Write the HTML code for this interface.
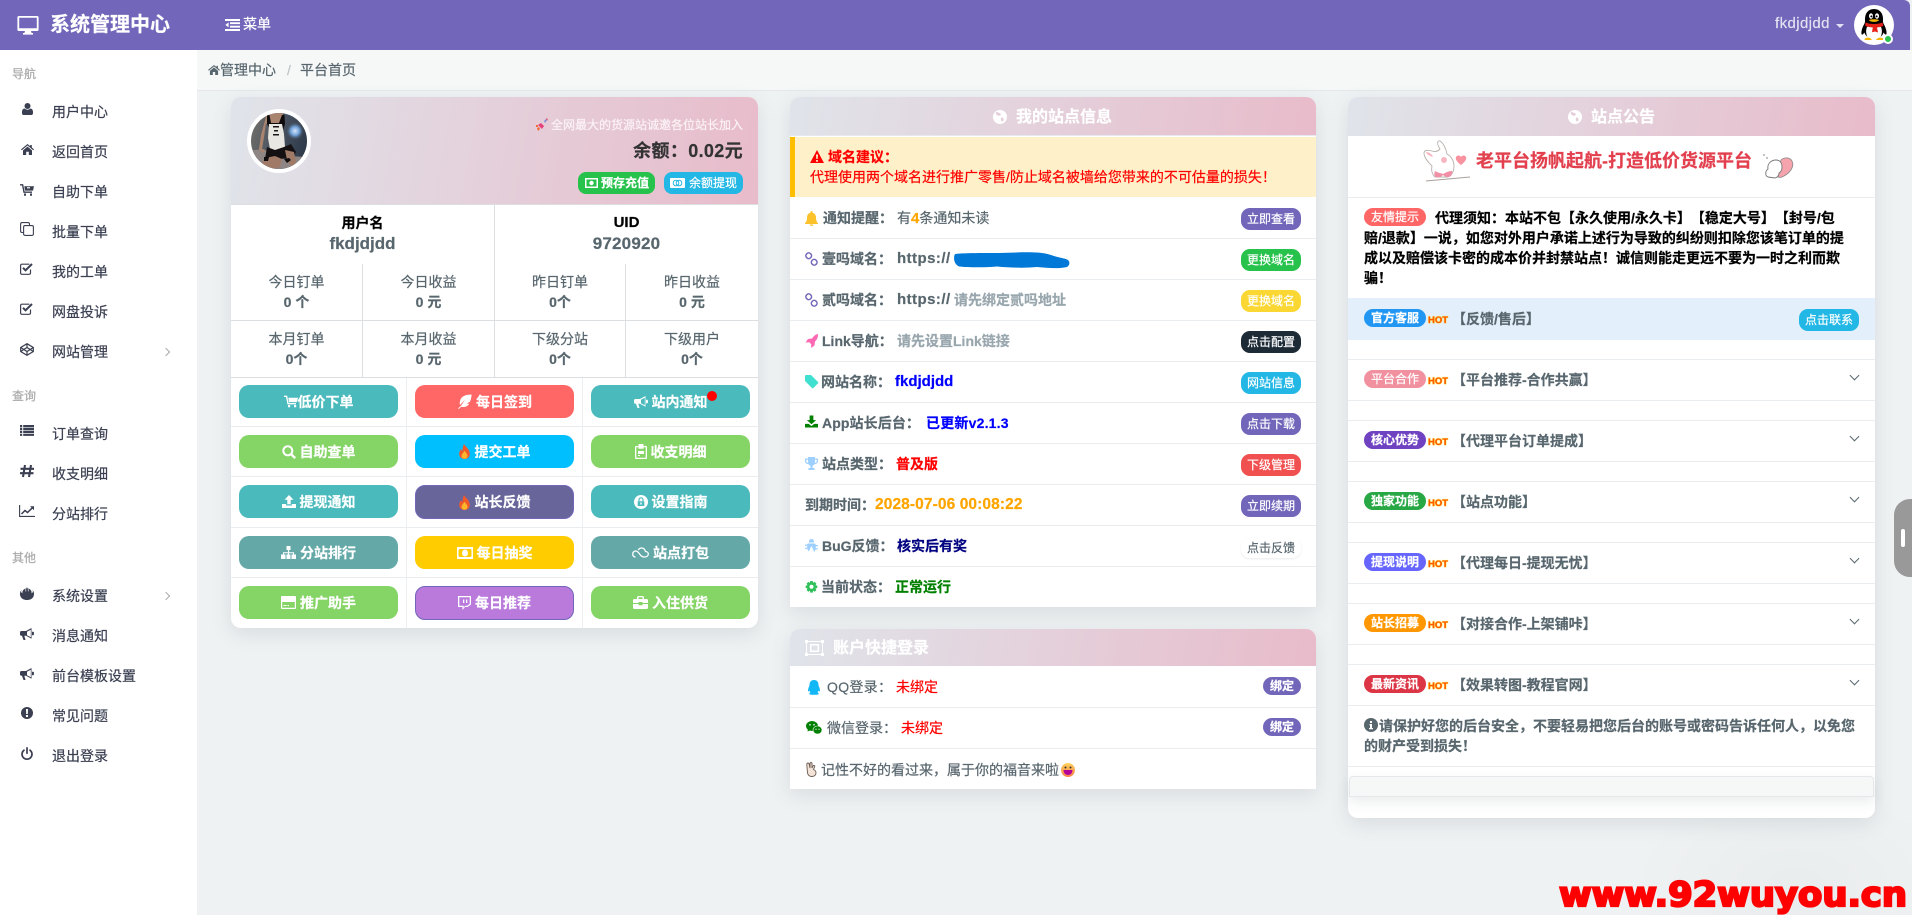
<!DOCTYPE html>
<html lang="zh"><head><meta charset="utf-8"><title>系统管理中心</title>
<style>
*{box-sizing:border-box}
html,body{margin:0;padding:0;width:1912px;height:915px;overflow:hidden;background:#eff2f3}
body{position:relative;font-family:"Liberation Sans","Noto Sans CJK SC",sans-serif;font-size:14px;color:#58666e;text-spacing-trim:space-all;-webkit-text-stroke-width:.2px}
.t{position:absolute;white-space:nowrap;line-height:20px}
.b{font-weight:700}
.a{position:absolute}
.ib{display:inline-block}
svg{display:block;overflow:visible}
.a svg,svg.a{position:absolute}
.card{position:absolute;background:#fff;border-radius:10px;box-shadow:0 6px 20px rgba(60,80,90,.13)}
.grad{position:absolute;background:linear-gradient(100deg,#e0e4ea,#e8bbca)}
.ln{position:absolute;height:1px;background:#e9edf0}
.ln2{position:absolute;height:1px;background:#dcdfe1}
.v{position:absolute;width:1px;background:#dcdfe1}
.v2{position:absolute;width:1px;background:#edf0f2}
.side{color:#3a3f51}
.sh{color:#a9a9a9;font-size:12px}
.btn{position:absolute;width:159px;height:33px;border-radius:10px;color:#fff;font-weight:700;display:flex;align-items:center;justify-content:center;gap:4px;line-height:20px;white-space:nowrap}
.pill{position:absolute;width:60px;height:22px;border-radius:9px;color:#fff;font-size:12px;text-align:center;line-height:22px;white-space:nowrap}
.tag{position:absolute;width:62px;height:18px;border-radius:9px;color:#fff;font-size:12px;font-weight:700;text-align:center;line-height:18px;white-space:nowrap}
.hot{position:absolute;font-size:9.5px;line-height:10px;font-weight:700;color:#ff5a00;text-shadow:0 0 1px #ffe000,0 0 1px #ffe000,0 0 1px #ffe000}
.cv{position:absolute;width:7px;height:7px;border-right:1.4px solid #58666e;border-bottom:1.4px solid #58666e;transform:rotate(45deg)}
.sc{position:absolute;width:6px;height:6px;border-right:1.3px solid #aaa;border-top:1.3px solid #aaa;transform:rotate(45deg)}
</style></head><body>

<div class="a" style="left:1620px;top:780px;width:292px;height:135px;background:radial-gradient(ellipse at 60% 80%,rgba(0,0,0,.025),rgba(0,0,0,0) 70%)"></div>

<!-- top bar -->
<div class="a" style="left:0;top:0;width:1910px;height:50px;background:#7266ba;border-top-right-radius:6px"></div>
<svg class="a" style="left:17px;top:15px" width="22" height="20" viewBox="0 0 22 20"><path fill="#fff" d="M2 1h18a1.6 1.6 0 0 1 1.6 1.6v11.8A1.6 1.6 0 0 1 20 16h-6l.6 2H16v1.6H6V18h1.4L8 16H2A1.6 1.6 0 0 1 .4 14.400V2.600A1.600 1.600 0 0 1 2 1zm.2 1.800v10.400h17.600V2.800z"/></svg>
<div class="t b" style="left:50px;top:15px;font-size:20px;color:#fff">系统管理中心</div>
<svg class="a" style="left:225px;top:19px" width="15" height="12" viewBox="0 0 15 12"><path fill="#fff" d="M0 0h15v2H0zM5 3.300h10v1.800H5zM5 6.800h10v1.800H5zM0 10h15v2H0zM3.600 3.400v5L.4 5.900z"/></svg>
<div class="t" style="left:243px;top:14px;color:#fff">菜单</div>
<div class="t" style="left:1775px;top:14px;color:#e4e1f2;font-size:15px;letter-spacing:.4px">fkdjdjdd</div>
<div class="a" style="left:1836px;top:24px;width:0;height:0;border:4px solid transparent;border-top-color:#e4e1f2"></div>
<svg class="a" style="left:1854px;top:5px" width="40" height="40" viewBox="0 0 40 40">
<circle cx="20" cy="20" r="20" fill="#fff"/>
<path fill="#000" d="M20 4c-6 0-9 4.500-9 10 0 2 .3 3-.7 5-2 3.500-3.200 7-2.800 10 .6 1.500 2 0 2.800-1.500 1 2.500 2.500 4 4 5h11.400c1.500-1 3-2.500 4-5 .8 1.500 2.200 3 2.800 1.500.4-3-.8-6.500-2.800-10-1-2-.7-3-.7-5 0-5.500-3-10-9-10z"/>
<path fill="#fff" d="M13 22c1-1 13-1 14 0 1.500 3 1 8-1 11H14c-2-3-2.500-8-1-11z"/>
<ellipse cx="17" cy="11" rx="2" ry="2.800" fill="#fff"/><ellipse cx="23" cy="11" rx="2" ry="2.800" fill="#fff"/>
<circle cx="17.400" cy="11.400" r="1" fill="#000"/><circle cx="22.600" cy="11.400" r="1" fill="#000"/>
<path fill="#f5b400" d="M15 15c2-1 8-1 10 0-1 2.500-9 2.500-10 0zM12 33c2-1 5 0 6 2h-7c-1 0 0-2 1-2zM28 33c-2-1-5 0-6 2h7c1 0 0-2-1-2z"/>
<path fill="#e62117" d="M11.500 17.500c4 2 13 2 17 0l.8 3.500c-2 .8-4 1.300-6.300 1.500l1 5-3-1-3 .8.800-4.800c-3-.2-5.500-.8-7.600-1.500z"/>
</svg>
<div class="a" style="left:1883px;top:34px;width:10px;height:10px;border-radius:50%;background:#27c24c;border:2px solid #fff"></div>

<!-- sidebar -->
<div class="a" style="left:0;top:50px;width:197px;height:865px;background:#fff"></div>
<div class="t sh" style="left:12px;top:64px">导航</div>
<div class="t side" style="left:52px;top:102px">用户中心</div>
<div class="t side" style="left:52px;top:142px">返回首页</div>
<div class="t side" style="left:52px;top:182px">自助下单</div>
<div class="t side" style="left:52px;top:222px">批量下单</div>
<div class="t side" style="left:52px;top:262px">我的工单</div>
<div class="t side" style="left:52px;top:302px">网盘投诉</div>
<div class="t side" style="left:52px;top:342px">网站管理</div>
<div class="t sh" style="left:12px;top:386px">查询</div>
<div class="t side" style="left:52px;top:424px">订单查询</div>
<div class="t side" style="left:52px;top:464px">收支明细</div>
<div class="t side" style="left:52px;top:504px">分站排行</div>
<div class="t sh" style="left:12px;top:548px">其他</div>
<div class="t side" style="left:52px;top:586px">系统设置</div>
<div class="t side" style="left:52px;top:626px">消息通知</div>
<div class="t side" style="left:52px;top:666px">前台模板设置</div>
<div class="t side" style="left:52px;top:706px">常见问题</div>
<div class="t side" style="left:52px;top:746px">退出登录</div>
<div class="sc" style="left:163px;top:349px"></div>
<div class="sc" style="left:163px;top:593px"></div>
<!-- side icons -->
<svg class="a" style="left:22px;top:103px" width="11" height="12" viewBox="0 0 11 12"><circle cx="5.500" cy="3" r="3" fill="#3a3f51"/><path fill="#3a3f51" d="M0 9c0-2.500 1.500-3.500 2.500-3.500 1 .8 2 1.200 3 1.200s2-.4 3-1.200c1 0 2.500 1 2.500 3.500v1.300c0 1-.7 1.700-1.700 1.700H1.700C.7 12 0 11.300 0 10.300z"/></svg>
<svg class="a" style="left:21px;top:144px" width="13" height="11" viewBox="0 0 13 11"><path fill="#3a3f51" d="M6.500 0L0 5.400l.8.900 5.700-4.800 5.700 4.800.8-.9-2.200-1.900V1H9.200v1.200zM2 6.400L6.500 2.600 11 6.400V11H7.800V7.700H5.200V11H2z"/></svg>
<svg class="a" style="left:20px;top:184px" width="14" height="12" viewBox="0 0 14 12"><path fill="none" stroke="#3a3f51" stroke-width="1.400" d="M0 .8h2.600l1.400 7.400h8"/><path fill="#3a3f51" d="M4.300 2.200H14L13 6.600H5z M4 9.500h2v2.200H4zM10 9.500h2v2.200h-2z"/><path fill="#fff" d="M7 3.200h3v1.200H7z"/></svg>
<svg class="a" style="left:20px;top:222px" width="14" height="14" viewBox="0 0 14 14"><g fill="none" stroke="#3a3f51" stroke-width="1.100"><path d="M3.500 10.500H2A1.500 1.500 0 0 1 .6 9V2A1.500 1.500 0 0 1 2 .6h6A1.500 1.500 0 0 1 9.500 2v1"/><rect x="3.600" y="3.600" width="9.800" height="9.800" rx="1.500"/></g></svg>
<svg class="a" style="left:20px;top:263px" width="13" height="12" viewBox="0 0 13 12"><path fill="none" stroke="#3a3f51" stroke-width="1.200" d="M10.500 6.500V10a1.300 1.300 0 0 1-1.300 1.300H1.900A1.300 1.300 0 0 1 .6 10V2.500A1.300 1.300 0 0 1 1.900 1.200h7.500"/><path fill="none" stroke="#3a3f51" stroke-width="2" d="M3 4.800l2.500 2.500L12 1"/></svg>
<svg class="a" style="left:20px;top:303px" width="13" height="12" viewBox="0 0 13 12"><path fill="none" stroke="#3a3f51" stroke-width="1.200" d="M10.500 6.500V10a1.300 1.300 0 0 1-1.300 1.300H1.900A1.300 1.300 0 0 1 .6 10V2.500A1.300 1.300 0 0 1 1.900 1.200h7.500"/><path fill="none" stroke="#3a3f51" stroke-width="2" d="M3 4.800l2.500 2.500L12 1"/></svg>
<svg class="a" style="left:20px;top:343px" width="14" height="13" viewBox="0 0 14 13"><g fill="none" stroke="#3a3f51" stroke-width="1.200"><path d="M7 .7L13.300 4.500v4L7 12.300.7 8.500v-4z"/><path d="M.7 4.500L7 8.500l6.300-4M.7 8.500L7 4.500l6.300 4M7 .7v3.800M7 8.500v3.800"/></g></svg>
<svg class="a" style="left:20px;top:425px" width="14" height="11" viewBox="0 0 14 11"><path fill="#3a3f51" d="M0 0h2.200v2.200H0zM3.200 0H14v2.200H3.200zM0 2.900h2.200v2.200H0zM3.200 2.900H14v2.200H3.200zM0 5.800h2.200v2.200H0zM3.200 5.800H14v2.200H3.200zM0 8.700h2.200v2.200H0zM3.200 8.700H14v2.200H3.200z"/></svg>
<svg class="a" style="left:20px;top:465px" width="14" height="12" viewBox="0 0 14 12"><path fill="none" stroke="#3a3f51" stroke-width="2.100" d="M5 0L3 12M11 0L9 12M.5 3.800H14M0 8.200H13.500"/></svg>
<svg class="a" style="left:19px;top:505px" width="16" height="12" viewBox="0 0 16 12"><path fill="none" stroke="#3a3f51" stroke-width="1.100" d="M.6 0v11.400H16"/><path fill="none" stroke="#3a3f51" stroke-width="1.500" d="M2.500 9l3.500-3.500 2.500 2L14 2.200"/><path fill="#3a3f51" d="M11 1.200h4v4z"/></svg>
<svg class="a" style="left:20px;top:587px" width="14" height="13" viewBox="0 0 14 13"><path fill="#3a3f51" d="M7 0l.9 2v2.500L8.600 4.200 8.300 1.400C11 2.500 12 4.500 11.500 6.500l1.500-1.500-.5-2C14 4.500 14.500 7 13.500 9.500 12.500 11.800 10 13 7 13S1.500 11.800.5 9.500C-.5 7 0 4.500 1.500 3l-.5 2 1.500 1.500C2 4.500 3 2.500 5.700 1.400L5.400 4.200l.7.300V2z"/></svg>
<svg class="a" style="left:20px;top:628px" width="14" height="12" viewBox="0 0 14 12"><path fill="#3a3f51" d="M11.500 0L6 3H1.500A1.500 1.500 0 0 0 0 4.500v1.800A1.500 1.500 0 0 0 1.500 7.800H2L3.500 12h2L4.300 7.800H6l5.500 3zM10.800 1.800v7.400L7 7.200V3.800z"/><path fill="#3a3f51" d="M12 3.800h1.200c.5 0 .8.500.8 1.700s-.3 1.700-.8 1.700H12z"/></svg>
<svg class="a" style="left:20px;top:668px" width="14" height="12" viewBox="0 0 14 12"><path fill="#3a3f51" d="M11.500 0L6 3H1.500A1.500 1.500 0 0 0 0 4.500v1.800A1.500 1.500 0 0 0 1.500 7.800H2L3.500 12h2L4.300 7.800H6l5.500 3zM10.800 1.800v7.400L7 7.200V3.800z"/><path fill="#3a3f51" d="M12 3.800h1.200c.5 0 .8.500.8 1.700s-.3 1.700-.8 1.700H12z"/></svg>
<svg class="a" style="left:21px;top:707px" width="12" height="12" viewBox="0 0 12 12"><circle cx="6" cy="6" r="6" fill="#3a3f51"/><path fill="#fff" d="M5 2h2l-.2 5H5.200zM5 8h2v2H5z"/></svg>
<svg class="a" style="left:21px;top:747px" width="12" height="13" viewBox="0 0 12 13"><path fill="none" stroke="#3a3f51" stroke-width="1.700" stroke-linecap="round" d="M3 3.200A5 5 0 1 0 9 3.200M6 .9v5.400"/></svg>

<!-- breadcrumb -->
<div class="a" style="left:197px;top:50px;width:1715px;height:41px;background:#f6f8f8;border-bottom:1px solid #e4e8ea"></div>
<svg class="a" style="left:208px;top:65px" width="12" height="10" viewBox="0 0 13 11"><path fill="#58666e" d="M6.500 0L0 5.400l.8.900 5.700-4.800 5.700 4.800.8-.9-2.200-1.900V1H9.200v1.200zM2 6.400L6.500 2.600 11 6.400V11H7.800V7.700H5.200V11H2z"/></svg>
<div class="t" style="left:220px;top:60px">管理中心</div>
<div class="t" style="left:287px;top:60px;color:#bcc4c8">/</div>
<div class="t" style="left:300px;top:60px">平台首页</div>

<!-- card 1 -->
<div class="card" style="left:231px;top:97px;width:527px;height:531px"></div>
<div class="grad" style="left:231px;top:97px;width:527px;height:107px;border-radius:10px 10px 0 0"></div>
<svg class="a" style="left:247px;top:109px" width="64" height="64" viewBox="0 0 64 64">
<defs><clipPath id="av"><circle cx="32" cy="32" r="28"/></clipPath><linearGradient id="avb" x1="0" y1="0" x2="1" y2=".3"><stop offset="0" stop-color="#7c756e"/><stop offset=".6" stop-color="#46505e"/><stop offset="1" stop-color="#2f3a4a"/></linearGradient><radialGradient id="glow"><stop offset="0" stop-color="#d5e6fb"/><stop offset=".5" stop-color="#6f9fd8"/><stop offset="1" stop-color="#46505e" stop-opacity="0"/></radialGradient></defs>
<circle cx="32" cy="32" r="32" fill="#fff"/>
<g clip-path="url(#av)"><rect width="64" height="64" fill="url(#avb)"/>
<path fill="#8e8684" d="M0 42l16-2 12 6 30 2 6 16H0z"/>
<circle cx="48" cy="22" r="9" fill="url(#glow)"/>
<path fill="#a9846f" d="M21 0h14l2 12-2 6H22l-3-4-2 14-2 12 4 2-4 2-3-4 2-14z"/>
<path fill="#2a2224" d="M22 0h12l-1 4h-10z"/>
<path fill="#0f0c0e" d="M20 6h2.500l1.500 8h8l3-8h2.500l.5 9-2 6H23l-3-6z"/>
<path fill="#e9e7e2" d="M22 15h13l2 10 1 13-7 4-8-2-2-11z"/>
<path fill="#1a1618" d="M26 17h6v1.500h-6zM27 21h4v1.500h-4zM26 25h6v1.500h-6z"/>
<path fill="#151113" d="M20 38l8 3 9-3 7-3 5 8-3 6-14 1-8 2-6-2z"/>
<path fill="#a07a67" d="M18 49l10-2 7 3-2 8-14 4-4-8zM38 41l9 2 2 10-4 6-5-8z"/>
<path fill="#0f0c0e" d="M17 48h5l-1 4h-4zM37 50l5-1 2 2-4 3z"/>
</g></svg>
<svg class="a" style="left:536px;top:118px" width="12" height="13" viewBox="0 0 12 13"><path fill="#7f8fd8" d="M8 3l2-2 1 1-2 3z"/><path fill="#e8407a" d="M2 7l3-2 3 3-2 3z"/><path fill="#f26a3a" d="M1 10l2-1 1 2-2 2zM0 7h2v2H0z"/><path fill="#e84f6a" d="M10 0l2 1-1 2z"/></svg>
<div class="t" style="left:551px;top:115px;font-size:12px;color:#fbf3f6">全网最大的货源站诚邀各位站长加入</div>
<div class="t b" style="right:1169px;top:141px;font-size:18px;color:#333;letter-spacing:.35px">余额：0.02元</div>
<div class="a" style="left:578px;top:172px;width:77px;height:22px;border-radius:8px;background:#27c24c;color:#fff;font-size:12px;font-weight:700;line-height:22px;padding-left:23px;white-space:nowrap">预存充值</div>
<svg class="a" style="left:585px;top:178px" width="13" height="10" viewBox="0 0 13 10"><path fill="#fff" fill-rule="evenodd" d="M0 0h13v10H0zM1.500 1.500v7h10v-7z"/><circle cx="6.500" cy="5" r="2.200" fill="#fff"/></svg>
<div class="a" style="left:664px;top:172px;width:79px;height:22px;border-radius:8px;background:#23b7e5;color:#fff;font-size:12px;line-height:22px;padding-left:25px;white-space:nowrap">余额提现</div>
<svg class="a" style="left:670px;top:178px" width="15" height="10" viewBox="0 0 15 10"><rect width="15" height="10" fill="#fff" rx="1"/><circle cx="6" cy="5" r="2.800" fill="none" stroke="#23b7e5"/><circle cx="9" cy="5" r="2.800" fill="none" stroke="#23b7e5"/></svg>

<div class="ln2" style="left:231px;top:204px;width:527px"></div>
<div class="v" style="left:494px;top:205px;height:172px"></div>
<div class="t b" style="left:231px;width:263px;top:213px;text-align:center;color:#000">用户名</div>
<div class="t b" style="left:231px;width:263px;top:234px;text-align:center;font-size:17px">fkdjdjdd</div>
<div class="t b" style="left:495px;width:263px;top:213px;text-align:center;color:#000;font-size:15px">UID</div>
<div class="t b" style="left:495px;width:263px;top:234px;text-align:center;font-size:17px;letter-spacing:.2px">9720920</div>
<div class="v" style="left:362px;top:264px;height:113px"></div>
<div class="v" style="left:625px;top:264px;height:113px"></div>
<div class="ln2" style="left:231px;top:320px;width:527px"></div>
<div class="ln2" style="left:231px;top:377px;width:527px"></div>

<div class="t" style="left:231px;width:131px;top:272px;text-align:center">今日钉单</div>
<div class="t b" style="left:231px;width:131px;top:292px;text-align:center">0 个</div>
<div class="t" style="left:363px;width:131px;top:272px;text-align:center">今日收益</div>
<div class="t b" style="left:363px;width:131px;top:292px;text-align:center">0 元</div>
<div class="t" style="left:495px;width:130px;top:272px;text-align:center">昨日钉单</div>
<div class="t b" style="left:495px;width:130px;top:292px;text-align:center">0个</div>
<div class="t" style="left:626px;width:132px;top:272px;text-align:center">昨日收益</div>
<div class="t b" style="left:626px;width:132px;top:292px;text-align:center">0 元</div>
<div class="t" style="left:231px;width:131px;top:329px;text-align:center">本月钉单</div>
<div class="t b" style="left:231px;width:131px;top:349px;text-align:center">0个</div>
<div class="t" style="left:363px;width:131px;top:329px;text-align:center">本月收益</div>
<div class="t b" style="left:363px;width:131px;top:349px;text-align:center">0 元</div>
<div class="t" style="left:495px;width:130px;top:329px;text-align:center">下级分站</div>
<div class="t b" style="left:495px;width:130px;top:349px;text-align:center">0个</div>
<div class="t" style="left:626px;width:132px;top:329px;text-align:center">下级用户</div>
<div class="t b" style="left:626px;width:132px;top:349px;text-align:center">0个</div>

<div class="v2" style="left:406px;top:378px;height:250px"></div>
<div class="v2" style="left:582px;top:378px;height:250px"></div>
<div class="ln" style="left:231px;top:426px;width:527px"></div>
<div class="ln" style="left:231px;top:476px;width:527px"></div>
<div class="ln" style="left:231px;top:527px;width:527px"></div>
<div class="ln" style="left:231px;top:577px;width:527px"></div>

<!-- row 1 -->
<div class="btn" style="left:239px;top:385px;background:#4bbabc;gap:0"><svg width="14" height="13" viewBox="0 0 14 12"><path fill="none" stroke="#fff" stroke-width="1.400" d="M0 .8h2.600l1.400 7.400h8"/><path fill="#fff" d="M4.300 2.200H14L13 6.600H5zM4 9.500h2.200v2.200H4zM10 9.500h2.200v2.200H10z"/></svg>低价下单</div>
<div class="btn" style="left:415px;top:385px;background:#ff6666"><svg width="15" height="15" viewBox="0 0 15 15"><path fill="#fff" d="M14.500.5C9 .5 5 2 3.500 5.500c-1 2.500-.8 4.500-.5 5.500L8 5.500 4 11.800 1 14.500l.8.500 2.400-2.300c2.800.8 6.300 0 8-3L9.500 9.500l3.500-1.700c1-2.500 1.500-5 1.500-7.300z"/></svg>每日签到</div>
<div class="btn" style="left:591px;top:385px;background:#4bbabc"><svg width="14" height="12" viewBox="0 0 14 12"><path fill="#fff" d="M11.500 0L6 3H1.500A1.500 1.500 0 0 0 0 4.500v1.800A1.500 1.500 0 0 0 1.500 7.800H2L3.500 12h2L4.300 7.800H6l5.500 3zM10.800 1.800v7.400L7 7.200V3.800z"/><path fill="#fff" d="M12 3.800h1.200c.5 0 .8.500.8 1.700s-.3 1.700-.8 1.700H12z"/></svg>站内通知</div>
<div class="a" style="left:707px;top:391px;width:10px;height:10px;border-radius:50%;background:#f00"></div>
<!-- row 2 -->
<div class="btn" style="left:239px;top:435px;background:#85d466"><svg width="14" height="14" viewBox="0 0 14 14"><circle cx="5.800" cy="5.800" r="4.500" fill="none" stroke="#fff" stroke-width="2"/><path stroke="#fff" stroke-width="2.400" d="M9 9l4.200 4.200"/></svg>自助查单</div>
<div class="btn" style="left:415px;top:435px;background:#00bfff;gap:5px"><svg width="11" height="15" viewBox="0 0 11 15"><path fill="#f0592a" d="M5 0c1 2.500 5.500 4.500 5.800 9.500C11 13 8.500 15 5.500 15S0 13 .2 9.500C.3 7.500 1.500 6 2 5c.5 1 .8 1.500 1.500 2C3.500 4 4 2 5 0z"/><path fill="#fdb52c" d="M5.500 6.500c.5 1.500 3 3 3 5.500 0 1.700-1.300 2.800-3 2.800s-3-1.100-3-2.800c0-2 2.300-3.500 3-5.500z"/></svg>提交工单</div>
<div class="btn" style="left:591px;top:435px;background:#85d466"><svg width="12" height="15" viewBox="0 0 12 15"><path fill="#fff" fill-rule="evenodd" d="M1 2h2.500V0h5v2H11a1 1 0 0 1 1 1v11a1 1 0 0 1-1 1H1a1 1 0 0 1-1-1V3a1 1 0 0 1 1-1zm.3 1.300v10.400h9.400V3.300H8.500v1.500h-5V3.300zM3 7h6v3H3zM3 11h2v1H3z"/></svg>收支明细</div>
<!-- row 3 -->
<div class="btn" style="left:239px;top:485px;background:#4bbabc"><svg width="14" height="13" viewBox="0 0 14 13"><path fill="#fff" d="M7 0l4.500 4.800H8.700v4.500H5.300V4.800H2.500zM0 9h4.200v1.500h5.600V9H14v4H0z"/></svg>提现通知</div>
<div class="btn" style="left:415px;top:485px;height:34px;background:#67659a;border:1px solid #7266ba;gap:5px"><svg width="11" height="15" viewBox="0 0 11 15"><path fill="#f0592a" d="M5 0c1 2.500 5.500 4.500 5.800 9.500C11 13 8.500 15 5.500 15S0 13 .2 9.500C.3 7.500 1.500 6 2 5c.5 1 .8 1.500 1.500 2C3.500 4 4 2 5 0z"/><path fill="#fdb52c" d="M5.500 6.500c.5 1.500 3 3 3 5.500 0 1.700-1.300 2.800-3 2.800s-3-1.100-3-2.800c0-2 2.300-3.500 3-5.500z"/></svg>站长反馈</div>
<div class="btn" style="left:591px;top:485px;background:#4bbabc"><svg width="14" height="14" viewBox="0 0 14 14"><circle cx="7" cy="7" r="7" fill="#fff"/><path fill="#4bbabc" d="M3.700 6.200h6.600v4.800H3.700z"/><path fill="none" stroke="#4bbabc" stroke-width="1.200" d="M5 6V4.800a2 2 0 0 1 4 0V6"/><path fill="#fff" d="M6.300 7.500h1.400v2H6.300z"/></svg>设置指南</div>
<!-- row 4 -->
<div class="btn" style="left:239px;top:536px;background:#64a8a8"><svg width="15" height="13" viewBox="0 0 15 13"><path fill="#fff" d="M5.500 0h4v4h-1.400v2.300h5v2.200H15V13h-4.500V8.500h1.500V7.300H8.100v1.200h1.400V13h-4V8.500h1.400V7.300H3v1.200h1.500V13H0V8.500h2V6.300h4.900V4H5.500z"/></svg>分站排行</div>
<div class="btn" style="left:415px;top:536px;background:#fc0"><svg width="16" height="12" viewBox="0 0 16 12"><path fill="#fff" fill-rule="evenodd" d="M0 0h16v12H0zM2.500 2L1.500 3v6l1 1h11l1-1V3l-1-1z"/><ellipse cx="8" cy="6" rx="3" ry="3.500" fill="#fff"/></svg>每日抽奖</div>
<div class="btn" style="left:591px;top:536px;background:#64a8a8"><svg width="17" height="11" viewBox="0 0 17 11"><path fill="none" stroke="#fff" stroke-width="1.300" d="M3.500 10C1.500 10 .7 8.500.7 7 .7 5.300 2 4 3.800 4c2 0 3 2 4.200 3.500C9 9 10 10 12.500 10 14.800 10 16.300 8.800 16.300 7 16.300 5.500 15 4.500 13.500 4.500 13 2.500 11.500 1 9.500 1 8 1 7 1.800 6.300 3"/></svg>站点打包</div>
<!-- row 5 -->
<div class="btn" style="left:239px;top:586px;background:#85d466"><svg width="15" height="13" viewBox="0 0 15 13"><path fill="#fff" fill-rule="evenodd" d="M1 0h13a1 1 0 0 1 1 1v11a1 1 0 0 1-1 1H1a1 1 0 0 1-1-1V1a1 1 0 0 1 1-1zm.2 6v5.800h12.600V6zM2.500 9h3v1h-3zM6.500 9h1.500v1H6.500z"/></svg>推广助手</div>
<div class="btn" style="left:415px;top:586px;height:34px;background:#b97adc;border:1px solid #7266ba"><svg width="13" height="14" viewBox="0 0 13 14"><path fill="#fff" fill-rule="evenodd" d="M0 0h13v8.500L9.500 11H7l-2.500 3V11H0zM1.300 1.300v8.400h4.400v1.800l1.500-1.800h2l2.500-1.800V1.300zM5 3.500h1.300v3.500H5zM8 3.500h1.300v3.500H8z"/></svg>每日推荐</div>
<div class="btn" style="left:591px;top:586px;background:#85d466"><svg width="15" height="13" viewBox="0 0 15 13"><path fill="#fff" d="M5 0h5l1 1v2h2.500A1.500 1.500 0 0 1 15 4.500V7H9.500v-1h-4v1H0V4.500A1.500 1.500 0 0 1 1.500 3H4V1zM5.500 1.300V3h4V1.300zM0 8h5.500v1.200h4V8H15v3.500a1.500 1.500 0 0 1-1.500 1.500h-12A1.500 1.500 0 0 1 0 11.500z"/></svg>入住供货</div>

<!-- card 2 -->
<div class="card" style="left:790px;top:97px;width:526px;height:510px;border-radius:10px 10px 0 0"></div>
<div class="grad" style="left:790px;top:97px;width:526px;height:39px;border-radius:10px 10px 0 0;border-bottom:1px solid #e8e8f0"></div>
<svg class="a" style="left:993px;top:110px" width="14" height="14" viewBox="0 0 14 14"><circle cx="7" cy="7" r="7" fill="#fff"/><path fill="#e4cdd8" d="M3 1.800C5 3 7 2.500 8 4.500 7 6 5 6 4 5 3 4.500 2.500 3 3 1.800zM8.500 7.500c1.500 0 2.500 1 2 3-1 1.200-2 1-2.500 0-.5-1 0-2.500.5-3z"/></svg>
<div class="t b" style="left:1016px;top:108px;font-size:16px;color:#fff">我的站点信息</div>
<div class="a" style="left:790px;top:137px;width:526px;height:60px;background:#fef1c9;border-left:5px solid #ffbe00"></div>
<svg class="a" style="left:810px;top:150px" width="14" height="13" viewBox="0 0 14 13"><path fill="#f00" fill-rule="evenodd" d="M7 0l7 13H0zM6 4.500l.3 4.500h1.400L8 4.500zM6.100 10v1.700h1.800V10z"/></svg>
<div class="t b" style="left:828px;top:147px;color:#f00">域名建议：</div>
<div class="t" style="left:810px;top:167px;color:#f00">代理使用两个域名进行推广零售/防止域名被墙给您带来的不可估量的损失！</div>

<div class="ln" style="left:790px;top:238px;width:526px"></div>
<div class="ln" style="left:790px;top:279px;width:526px"></div>
<div class="ln" style="left:790px;top:320px;width:526px"></div>
<div class="ln" style="left:790px;top:361px;width:526px"></div>
<div class="ln" style="left:790px;top:402px;width:526px"></div>
<div class="ln" style="left:790px;top:443px;width:526px"></div>
<div class="ln" style="left:790px;top:484px;width:526px"></div>
<div class="ln" style="left:790px;top:525px;width:526px"></div>
<div class="ln" style="left:790px;top:566px;width:526px"></div>

<!-- r1 -->
<svg class="a" style="left:805px;top:211px" width="13" height="15" viewBox="0 0 13 15"><path fill="#fcc22c" d="M6.500 0a1 1 0 0 1 1 1v.7C9.800 2.200 11 4 11 6.500c0 3 .7 4.500 2 5.800v.7H0v-.7C1.300 11 2 9.500 2 6.500 2 4 3.200 2.200 5.500 1.700V1a1 1 0 0 1 1-1zM4.800 13.500h3.400c0 1-.7 1.500-1.700 1.500s-1.700-.5-1.700-1.500z"/></svg>
<div class="t b" style="left:823px;top:208px">通知提醒：</div>
<div class="t" style="left:897px;top:208px">有<span class="b" style="color:#ffa500;font-size:15px">4</span>条通知未读</div>
<div class="pill" style="left:1241px;top:208px;background:#7266ba">立即查看</div>
<!-- r2 -->
<svg class="a" style="left:805px;top:252px" width="13" height="14" viewBox="0 0 13 14"><g fill="none" stroke="#7266ba" stroke-width="1.500"><rect x="1" y="1" width="5.500" height="5.500" rx="2.500" transform="rotate(45 3.700 3.700)"/><rect x="6.500" y="7.500" width="5.500" height="5.500" rx="2.500" transform="rotate(45 9.200 10.200)"/></g></svg>
<div class="t b" style="left:822px;top:249px">壹吗域名：</div>
<div class="t b" style="left:897px;top:249px;font-size:15px;letter-spacing:.45px">https://</div>
<svg class="a" style="left:954px;top:252px" width="116" height="17" viewBox="0 0 116 17"><path fill="#0078d7" d="M1 2C10 1 25 1 45 1c20-.5 40-2 52 2 8 3 14 3 17 5 2 2 2 5-1 7-8 2-20 1-30 0-10 1-25 1-40-.5-12 1-28 1-38 0C0 12-1 6 1 2z"/></svg>
<div class="pill" style="left:1241px;top:249px;background:#27c24c">更换域名</div>
<!-- r3 -->
<svg class="a" style="left:805px;top:293px" width="13" height="14" viewBox="0 0 13 14"><g fill="none" stroke="#7266ba" stroke-width="1.500"><rect x="1" y="1" width="5.500" height="5.500" rx="2.500" transform="rotate(45 3.700 3.700)"/><rect x="6.500" y="7.500" width="5.500" height="5.500" rx="2.500" transform="rotate(45 9.200 10.200)"/></g></svg>
<div class="t b" style="left:822px;top:290px">贰吗域名：</div>
<div class="t b" style="left:897px;top:290px;font-size:15px;letter-spacing:.45px">https://</div>
<div class="t b" style="left:954px;top:290px;color:#98a6ad">请先绑定贰吗地址</div>
<div class="pill" style="left:1241px;top:290px;background:#fad733">更换域名</div>
<!-- r4 -->
<svg class="a" style="left:805px;top:334px" width="13" height="14" viewBox="0 0 13 14"><path fill="#ff69b4" d="M13 0c.2 3-.8 5.500-3 7.500l-.5 4L6 14l.3-3.700-2-2L.5 8.500 3 5l4-.5C9 2 10.500.3 13 0z"/></svg>
<div class="t b" style="left:822px;top:331px">Link导航：</div>
<div class="t b" style="left:897px;top:331px;color:#98a6ad">请先设置Link链接</div>
<div class="pill" style="left:1241px;top:331px;background:#1c2b36">点击配置</div>
<!-- r5 -->
<svg class="a" style="left:805px;top:375px" width="13" height="13" viewBox="0 0 13 13"><path fill="#40e0d0" d="M0 1a1 1 0 0 1 1-1h5l7 7a1 1 0 0 1 0 1.400L8.400 13a1 1 0 0 1-1.400 0L0 6z"/></svg>
<div class="t b" style="left:821px;top:372px">网站名称：</div>
<div class="t b" style="left:895px;top:372px;color:#00f;font-size:15px">fkdjdjdd</div>
<div class="pill" style="left:1241px;top:372px;background:#23b7e5">网站信息</div>
<!-- r6 -->
<svg class="a" style="left:805px;top:415px" width="13" height="13" viewBox="0 0 14 13"><path fill="#008000" d="M5 0h4v5h3L7 9.500 2 5h3zM0 9h4l3 2.500L10 9h4v4H0z"/></svg>
<div class="t b" style="left:822px;top:413px;letter-spacing:.1px">App站长后台：</div>
<div class="t b" style="left:926px;top:413px;color:#00f;letter-spacing:.2px">已更新v2.1.3</div>
<div class="pill" style="left:1241px;top:413px;background:#7266ba">点击下载</div>
<!-- r7 -->
<svg class="a" style="left:805px;top:457px" width="13" height="13" viewBox="0 0 13 13"><path fill="#9dd0ff" d="M3 0h7v1.500h3V4c0 2-1.500 3-3.500 3.300C9 8 8 8.700 7.500 9v2h2v2h-6v-2h2V9C5 8.700 4 8 3.500 7.300 1.500 7 0 6 0 4V1.500h3zM1.200 2.700V4c0 1 .8 1.700 2 2-.2-1-.2-2-.2-3.300zM11.800 2.700H10c0 1.300 0 2.300-.2 3.300 1.200-.3 2-1 2-2z"/></svg>
<div class="t b" style="left:822px;top:454px">站点类型：</div>
<div class="t b" style="left:896px;top:454px;color:#f00">普及版</div>
<div class="pill" style="left:1241px;top:454px;background:#f05050">下级管理</div>
<!-- r8 -->
<div class="t b" style="left:805px;top:495px">到期时间：</div>
<div class="t b" style="left:875px;top:495px;color:#ffa500;font-size:15.5px;letter-spacing:.1px">2028-07-06 00:08:22</div>
<div class="pill" style="left:1241px;top:495px;background:#7266ba">立即续期</div>
<!-- r9 -->
<svg class="a" style="left:805px;top:539px" width="13" height="14" viewBox="0 0 13 14"><path fill="#9dd0ff" d="M4 2.500a2.500 2.500 0 0 1 5 0v1H4zM3 4.500h7c.5.500.7 1 .8 1.500H13v1.200h-2.200v2H13v1.200h-2.400c-.3 1-.8 1.800-1.500 2.500L6.800 7.500h-.6L3.900 12.400c-.7-.7-1.200-1.500-1.500-2.500H0V8.700h2.200v-2H0V5.500h2.200c.1-.5.300-.7.800-1z"/></svg>
<div class="t b" style="left:822px;top:536px">BuG反馈：</div>
<div class="t b" style="left:897px;top:536px;color:#000080">核实后有奖</div>
<div class="pill" style="left:1241px;top:538px;background:#fff;color:#58666e;height:20px;line-height:20px;box-shadow:0 1px 2px rgba(0,0,0,.08)">点击反馈</div>
<!-- r10 -->
<svg class="a" style="left:805px;top:581px" width="13" height="13" viewBox="0 0 13 13"><path fill="#2fc05a" d="M5.300 0h2.400l.4 1.800 1.600-.9 1.700 1.700-.9 1.600 1.800.4v2.400l-1.800.4.900 1.600-1.700 1.700-1.600-.9-.4 1.800H5.300l-.4-1.800-1.600.9-1.700-1.700.9-1.600L.7 7V4.600l1.800-.4-.9-1.600 1.700-1.700 1.600.9z"/><circle cx="6.500" cy="5.800" r="2" fill="#fff"/></svg>
<div class="t b" style="left:821px;top:577px">当前状态：</div>
<div class="t b" style="left:895px;top:577px;color:#008000">正常运行</div>

<!-- card 3 -->
<div class="card" style="left:790px;top:629px;width:526px;height:160px;border-radius:10px 10px 0 0"></div>
<div class="grad" style="left:790px;top:629px;width:526px;height:37px;border-radius:10px 10px 0 0"></div>
<svg class="a" style="left:805px;top:640px" width="19" height="16" viewBox="0 0 19 16"><g fill="#fff"><path d="M0 0h3v3H0zM16 0h3v3h-3zM0 13h3v3H0zM16 13h3v3h-3zM3 1h13v1H3zM3 14h13v1H3zM1 3h1v10H1zM17 3h1v10h-1z"/><path fill-rule="evenodd" d="M5 4h9v8H5zM6.500 5.500v5h6v-5z"/></g></svg>
<div class="t b" style="left:833px;top:639px;font-size:16px;color:#fff">账户快捷登录</div>
<div class="ln" style="left:790px;top:707px;width:526px"></div>
<div class="ln" style="left:790px;top:748px;width:526px"></div>
<svg class="a" style="left:807px;top:680px" width="14" height="15" viewBox="0 0 14 15"><path fill="#12b7f5" d="M7 0c3 0 4.500 2 4.500 5 0 1 .5 1.500 1 3 .7 2 .5 3.500 0 3.500-.3 0-.6-.5-1-1-.2.8-.5 1.500-1 2 .7.300 1.300.700 1.300 1.200 0 .8-2.800 1.300-4.800 1C5 15 2.200 14.500 2.200 13.700c0-.5.600-.9 1.300-1.200-.5-.5-.8-1.200-1-2-.4.5-.7 1-1 1-.5 0-.7-1.500 0-3.500.5-1.500 1-2 1-3C2.500 2 4 0 7 0z"/></svg>
<div class="t" style="left:827px;top:677px;letter-spacing:.3px">QQ登录：</div>
<div class="t" style="left:896px;top:677px;color:#f00">未绑定</div>
<div class="a" style="left:1263px;top:677px;width:38px;height:18px;border-radius:9px;background:#7266ba;color:#fff;font-size:12px;font-weight:700;text-align:center;line-height:18px">绑定</div>
<svg class="a" style="left:806px;top:721px" width="16" height="14" viewBox="0 0 16 14"><ellipse cx="6" cy="5" rx="6" ry="5" fill="#008000"/><path fill="#008000" d="M2 8l-.5 2.500L5 9z"/><ellipse cx="11.500" cy="9" rx="4.500" ry="4" fill="#008000" stroke="#fff" stroke-width=".6"/><circle cx="4" cy="3.800" r=".8" fill="#fff"/><circle cx="8" cy="3.800" r=".8" fill="#fff"/><circle cx="10" cy="8.200" r=".6" fill="#fff"/><circle cx="13" cy="8.200" r=".6" fill="#fff"/></svg>
<div class="t" style="left:827px;top:718px">微信登录：</div>
<div class="t" style="left:901px;top:718px;color:#f00">未绑定</div>
<div class="a" style="left:1263px;top:718px;width:38px;height:18px;border-radius:9px;background:#7266ba;color:#fff;font-size:12px;font-weight:700;text-align:center;line-height:18px">绑定</div>
<svg class="a" style="left:805px;top:762px" width="13" height="15" viewBox="0 0 13 15"><path fill="#f3e3d8" stroke="#6b5a50" stroke-width=".9" d="M3 1c.8 0 1 .6 1.200 1.300L5 6V1.700C5 1 5.500.5 6 .5s1 .5 1 1.200V6l1-2c.3-.6.800-.8 1.300-.6.500.2.600.8.400 1.300L8.500 7.500c1.300.5 2.500 1.500 2.500 3.300 0 2.400-1.800 3.700-4 3.700-2.500 0-4-1.500-4.500-3.500L1.800 2.500C1.700 1.700 2.200 1 3 1z"/></svg>
<div class="t" style="left:821px;top:760px">记性不好的看过来，属于你的福音来啦</div>
<svg class="a" style="left:1061px;top:763px" width="14" height="14" viewBox="0 0 14 14"><defs><linearGradient id="emo" x1="0" y1="0" x2="0" y2="1"><stop offset="0" stop-color="#ffd35c"/><stop offset="1" stop-color="#f7804a"/></linearGradient></defs><circle cx="7" cy="7" r="7" fill="url(#emo)"/><circle cx="4.500" cy="4.500" r="1" fill="#333"/><circle cx="9.500" cy="4.500" r="1" fill="#333"/><path fill="#b3009b" d="M2.500 7h9c0 3-2 5-4.500 5s-4.500-2-4.500-5z"/></svg>

<!-- card 4 -->
<div class="card" style="left:1348px;top:97px;width:527px;height:721px"></div>
<div class="grad" style="left:1348px;top:97px;width:527px;height:39px;border-radius:10px 10px 0 0"></div>
<svg class="a" style="left:1568px;top:110px" width="14" height="14" viewBox="0 0 14 14"><circle cx="7" cy="7" r="7" fill="#fff"/><path fill="#e4cdd8" d="M3 1.800C5 3 7 2.500 8 4.500 7 6 5 6 4 5 3 4.500 2.500 3 3 1.800zM8.500 7.500c1.500 0 2.500 1 2 3-1 1.200-2 1-2.500 0-.5-1 0-2.500.5-3z"/></svg>
<div class="t b" style="left:1591px;top:108px;font-size:16px;color:#fff">站点公告</div>
<!-- banner -->
<svg class="a" style="left:1423px;top:140px" width="47" height="43" viewBox="0 0 47 43">
<path fill="#fff" stroke="#b8b0ac" stroke-width=".9" d="M17 9C13 3 15 0 17 1c3 2 6 7 7 13 4 2 7 7 7 12 0 5-2 9-6 11H12c-3-3-4-7-3-11C6 23 1 18 1 13c0-3 4-3 8-2 3 1 5 1 8-2z"/>
<path fill="#f8b6c0" d="M3 12c3 0 6 2 7 5-3-1-6-2-7-5zM24 20a3 3 0 1 1-6 0 3 3 0 0 1 6 0z"/>
<path fill="#f08fa5" d="M12 31c3 2 6 2 8 3 2-1 5-3 9-3 1 3-1 6-4 6-2 0-4-1-5-2-2 2-5 3-7 2-2-1-2-4-1-6z"/>
<path fill="#f8929e" d="M38 17c1-2 4-2 5 0 1 2-1 5-5 8-4-3-6-6-5-8 1-2 4-2 5 0z"/>
<path stroke="#a8a09c" stroke-width="1" d="M3 41l44-4"/></svg>
<div class="t b" style="left:1476px;top:150px;font-size:18px;line-height:22px;color:#e2404e">老平台扬帆起航-打造低价货源平台</div>
<svg class="a" style="left:1763px;top:153px" width="32" height="27" viewBox="0 0 32 27">
<path fill="#f5a3ad" stroke="#888" stroke-width=".8" d="M18 7c3-3 9-3 11 1 3 6-3 13-10 16-3 1-5 0-5-2z"/>
<path fill="#fff" stroke="#777" stroke-width=".9" d="M5 24c-3-1-3-6 0-8-1-5 3-9 8-9 4 0 6 3 6 7 0 3-1 5-3 6 0 2-1 4-4 5z"/>
<circle cx="1" cy="2" r=".7" fill="#666"/><circle cx="4" cy="5" r=".7" fill="#666"/></svg>
<div class="ln" style="left:1348px;top:197px;width:527px"></div>
<!-- notice -->
<div class="tag" style="left:1364px;top:208px;background:#ff6666;font-weight:400">友情提示</div>
<div class="t b" style="left:1435px;top:208px;color:#000">代理须知：本站不包【永久使用/永久卡<span class="ib">】</span><span class="ib">【</span>稳定大号<span class="ib">】</span><span class="ib">【</span>封号/包</div>
<div class="t b" style="left:1364px;top:228px;color:#000">赔/退款】一说，如您对外用户承诺上述行为导致的纠纷则扣除您该笔订单的提</div>
<div class="t b" style="left:1364px;top:248px;color:#000">成以及赔偿该卡密的成本价并封禁站点！诚信则能走更远不要为一时之利而欺</div>
<div class="t b" style="left:1364px;top:268px;color:#000">骗！</div>
<!-- blue row -->
<div class="a" style="left:1348px;top:298px;width:527px;height:42px;background:#e3f0fb"></div>
<div class="tag" style="left:1364px;top:309px;background:#2196f3">官方客服</div>
<div class="hot" style="left:1428px;top:316px">HOT</div>
<div class="t b" style="left:1452px;top:309px">【反馈/售后】</div>
<div class="pill" style="left:1799px;top:309px;background:#23b7e5">点击联系</div>
<!-- accordion -->
<div class="ln" style="left:1348px;top:359px;width:527px"></div><div class="ln" style="left:1348px;top:400px;width:527px"></div>
<div class="tag" style="left:1364px;top:370px;background:#f191a0;font-weight:400">平台合作</div><div class="hot" style="left:1428px;top:377px">HOT</div>
<div class="t b" style="left:1452px;top:370px">【平台推荐-合作共赢】</div><div class="cv" style="left:1851px;top:372px"></div>
<div class="ln" style="left:1348px;top:420px;width:527px"></div><div class="ln" style="left:1348px;top:461px;width:527px"></div>
<div class="tag" style="left:1364px;top:431px;background:#6f42c1">核心优势</div><div class="hot" style="left:1428px;top:438px">HOT</div>
<div class="t b" style="left:1452px;top:431px">【代理平台订单提成】</div><div class="cv" style="left:1851px;top:433px"></div>
<div class="ln" style="left:1348px;top:481px;width:527px"></div><div class="ln" style="left:1348px;top:522px;width:527px"></div>
<div class="tag" style="left:1364px;top:492px;background:#28a745">独家功能</div><div class="hot" style="left:1428px;top:499px">HOT</div>
<div class="t b" style="left:1452px;top:492px">【站点功能】</div><div class="cv" style="left:1851px;top:494px"></div>
<div class="ln" style="left:1348px;top:542px;width:527px"></div><div class="ln" style="left:1348px;top:583px;width:527px"></div>
<div class="tag" style="left:1364px;top:553px;background:#6666ff">提现说明</div><div class="hot" style="left:1428px;top:560px">HOT</div>
<div class="t b" style="left:1452px;top:553px">【代理每日-提现无忧】</div><div class="cv" style="left:1851px;top:555px"></div>
<div class="ln" style="left:1348px;top:603px;width:527px"></div><div class="ln" style="left:1348px;top:644px;width:527px"></div>
<div class="tag" style="left:1364px;top:614px;background:#ff9800">站长招募</div><div class="hot" style="left:1428px;top:621px">HOT</div>
<div class="t b" style="left:1452px;top:614px">【对接合作-上架铺咔】</div><div class="cv" style="left:1851px;top:616px"></div>
<div class="ln" style="left:1348px;top:664px;width:527px"></div><div class="ln" style="left:1348px;top:705px;width:527px"></div>
<div class="tag" style="left:1364px;top:675px;background:#dc3545">最新资讯</div><div class="hot" style="left:1428px;top:682px">HOT</div>
<div class="t b" style="left:1452px;top:675px">【效果转图-教程官网】</div><div class="cv" style="left:1851px;top:677px"></div>
<!-- footer text -->
<svg class="a" style="left:1364px;top:718px" width="14" height="14" viewBox="0 0 14 14"><circle cx="7" cy="7" r="7" fill="#58666e"/><path fill="#fff" d="M6 3h2v2H6zM5.500 6h2.500v4h1v1.200H5V10h1V7.200h-.5z"/></svg>
<div class="t b" style="left:1379px;top:716px">请保护好您的后台安全，不要轻易把您后台的账号或密码告诉任何人，以免您</div>
<div class="t b" style="left:1364px;top:736px">的财产受到损失！</div>
<div class="ln" style="left:1348px;top:766px;width:527px"></div>
<div class="a" style="left:1349px;top:776px;width:525px;height:21px;background:#f6f8f8;border:1px solid #e4e8ea;border-radius:4px 4px 0 0;box-shadow:0 5px 12px rgba(60,80,90,.1)"></div>

<!-- drag handle -->
<div class="a" style="left:1894px;top:499px;width:18px;height:78px;background:#999;border-radius:16px 0 0 16px"></div>
<div class="a" style="left:1901px;top:529px;width:4px;height:18px;background:#fff;border-radius:2px"></div>

<!-- watermark -->
<svg class="a" style="left:1555px;top:872px" width="357" height="43" viewBox="0 0 357 43"><text x="4" y="34" textLength="348" lengthAdjust="spacingAndGlyphs" font-family="'DejaVu Sans','Liberation Sans',sans-serif" font-weight="700" font-size="34" fill="#f00" stroke="#f00" stroke-width="2.200">www.92wuyou.cn</text></svg>
</body></html>
